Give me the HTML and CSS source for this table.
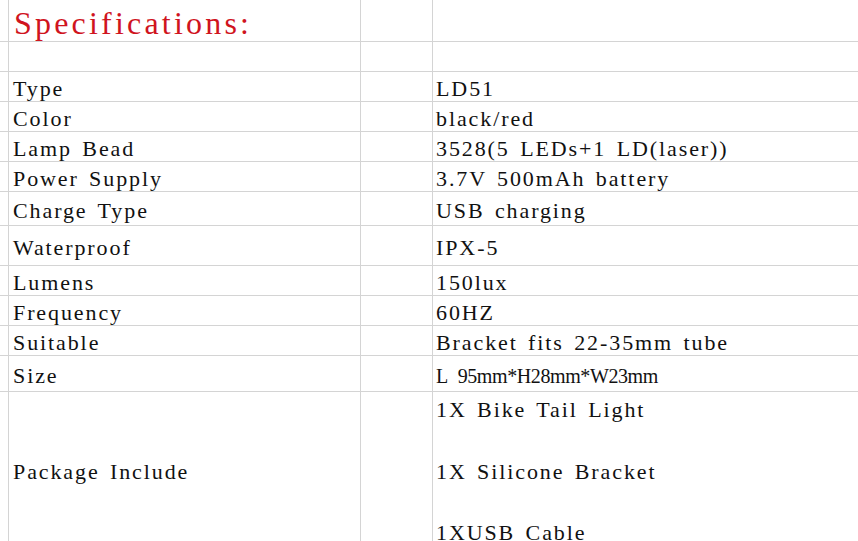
FILE: index.html
```html
<!DOCTYPE html>
<html>
<head>
<meta charset="utf-8">
<link rel="stylesheet" href="styles.css">
</head>
<body>
<div class="sheet">
  <div class="c"></div><div class="c k title"><span>Specifications:</span></div><div class="c"></div><div class="c"></div>
  <div class="c"></div><div class="c"></div><div class="c"></div><div class="c"></div>
  <div class="c"></div><div class="c k">Type</div><div class="c"></div><div class="c v">LD51</div>
  <div class="c"></div><div class="c k">Color</div><div class="c"></div><div class="c v">black/red</div>
  <div class="c"></div><div class="c k">Lamp Bead</div><div class="c"></div><div class="c v">3528(5 LEDs+1 LD(laser))</div>
  <div class="c"></div><div class="c k">Power Supply</div><div class="c"></div><div class="c v">3.7V 500mAh battery</div>
  <div class="c"></div><div class="c k">Charge Type</div><div class="c"></div><div class="c v">USB charging</div>
  <div class="c"></div><div class="c k">Waterproof</div><div class="c"></div><div class="c v">IPX-5</div>
  <div class="c"></div><div class="c k">Lumens</div><div class="c"></div><div class="c v">150lux</div>
  <div class="c"></div><div class="c k">Frequency</div><div class="c"></div><div class="c v">60HZ</div>
  <div class="c"></div><div class="c k">Suitable</div><div class="c"></div><div class="c v">Bracket fits 22-35mm tube</div>
  <div class="c"></div><div class="c k">Size</div><div class="c"></div><div class="c v tight">L 95mm*H28mm*W23mm</div>
  <div class="c"></div><div class="c k pkg">Package Include</div><div class="c"></div><div class="c v multi"><div class="lines"><span>1X Bike Tail Light</span><span>&nbsp;</span><span>1X Silicone Bracket</span><span>&nbsp;</span><span>1XUSB Cable</span></div></div>
</div>
</body>
</html>
```

FILE: styles.css
```css
html, body {
  margin: 0;
  padding: 0;
  background: #ffffff;
}
body {
  width: 858px;
  height: 541px;
  overflow: hidden;
}
.sheet {
  display: grid;
  grid-template-columns: 8px 351px 71px 1fr;
  grid-template-rows: 41px 29px 29px 29px 29px 29px 33px 39px 29px 29px 29px 35px 160px;
  gap: 1px;
  background: #d4d4d4;
  font-family: "Liberation Serif", "Times New Roman", serif;
  font-size: 22px;
  letter-spacing: 1.9px;
  word-spacing: 3px;
  color: #111111;
}
.c {
  background: #ffffff;
  display: flex;
  align-items: center;
  white-space: pre;
  padding-top: 5px;
  box-sizing: border-box;
}
.k {
  padding-left: 4px;
}
.v {
  padding-left: 3px;
}
.tight {
  letter-spacing: -0.4px;
  word-spacing: 6px;
  font-size: 20px;
}
.title {
  color: #d0141e;
  font-size: 32px;
  letter-spacing: 3.2px;
  padding-top: 5px;
  padding-left: 5px;
}
.lines {
  display: flex;
  flex-direction: column;
  line-height: 30.8px;
}
.multi {
  padding-top: 0;
}
.pkg {
  padding-top: 0;
}
```
